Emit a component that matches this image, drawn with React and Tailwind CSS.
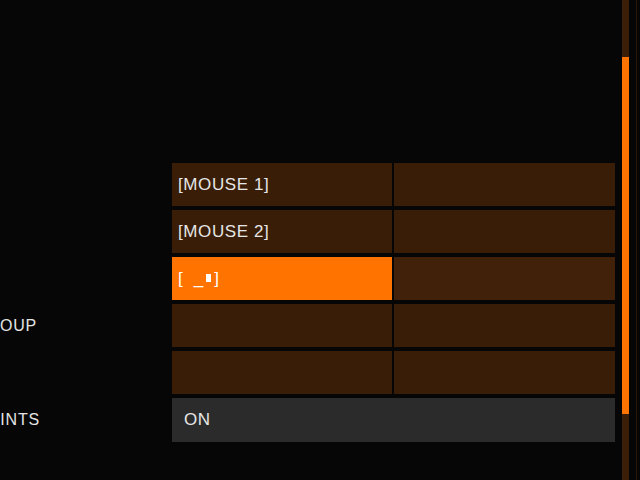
import React from "react";

// Key binding rows: left cell = primary binding, right cell = secondary
const ROWS = [
    { label: "", primary: "[MOUSE 1]" },
    { label: "", primary: "[MOUSE 2]" },
    { label: "", primary: "capture", active: true },
    { label: "GROUP", labelW: "w-[37px]", primary: "" },
    { label: "", primary: "" },
];

function Label({ text, width }) {
    // Label column is cut off by the left edge of the window
    return (
        <div className="w-[172px] shrink-0 flex items-center">
            <div className={`${width || "w-[38px]"} overflow-hidden flex justify-end`}>
                <span className="shrink-0 whitespace-nowrap text-[16px] text-[#e4e4e4] tracking-[0.8px]">
                    {text}
                </span>
            </div>
        </div>
    );
}

function CaptureText() {
    return (
        <span className="flex items-center">
            <span>[</span>
            <span className="ml-[11px]">_</span>
            <span className="ml-[3px] w-[5px] h-[8px] bg-white mb-[1px]" />
            <span className="ml-[3px]">]</span>
        </span>
    );
}

function BindingRow({ row }) {
    return (
        <div className="flex h-[43px]">
            <Label text={row.label} width={row.labelW} />
            <div className="flex gap-[2px] w-[443px]">
                <div
                    className={
                        row.active
                            ? "w-[220px] bg-[#ff7300] flex items-center px-[6px] text-[17px] text-white"
                            : "w-[220px] bg-[#391d07] flex items-center px-[6px] text-[17px] text-[#e6e6e6] tracking-[0.6px] whitespace-pre"
                    }
                >
                    {row.active ? <CaptureText /> : row.primary}
                </div>
                <div
                    className={
                        row.active
                            ? "w-[221px] bg-[#42210a]"
                            : "w-[221px] bg-[#391d07]"
                    }
                />
            </div>
        </div>
    );
}

export default function App() {
    return (
        <div
            className="relative w-[640px] h-[480px] bg-[#060606] overflow-hidden flex"
            style={{ fontFamily: "'Liberation Sans', Arial, sans-serif" }}
        >
            <div className="flex flex-col gap-[4px] pt-[163px]">
                {ROWS.map((row, i) => (
                    <BindingRow key={i} row={row} />
                ))}
                <div className="flex h-[44px]">
                    <Label text="POINTS" width="w-[40px]" />
                    <div className="w-[443px] bg-[#2b2b2b] flex items-center px-[12px] text-[17px] text-[#e6e6e6] tracking-[0.6px]">
                        ON
                    </div>
                </div>
            </div>

            {/* Scrollbar */}
            <div className="ml-[7px] w-[7px] h-full bg-[#3a1e08] flex flex-col">
                <div className="h-[57px]" />
                <div className="h-[357px] bg-[#ff7300]" />
            </div>
            <div className="ml-[7px] w-[1px] h-full bg-[#2a1606]" />
        </div>
    );
}
